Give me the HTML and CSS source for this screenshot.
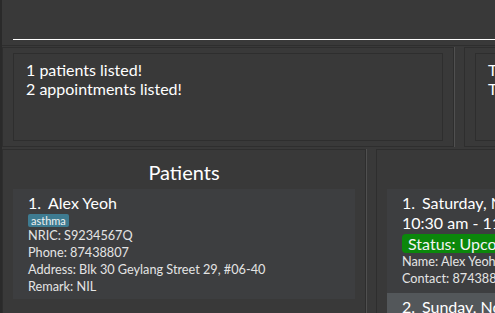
FILE: index.html
```html
<!DOCTYPE html>
<html>
<head>
<meta charset="utf-8">
<title>Clinic</title>
<link rel="stylesheet" href="styles.css">
</head>
<body>
<div class="app">
  <div class="command"><div class="command-field"></div></div>
  <div class="row results-row">
    <div class="pane result-pane left">
      <div class="box"><div class="result-text">1 patients listed!<br>2 appointments listed!</div></div>
    </div>
    <div class="divider"></div>
    <div class="pane result-pane right">
      <div class="box"><div class="result-text">Today's appointments: 1<br>Tomorrow's appointments: 1</div></div>
    </div>
  </div>
  <div class="row lists-row">
    <div class="pane list-pane">
      <div class="list-title">Patients</div>
      <div class="card patient-card">
        <div class="card-name"><span class="idx">1.</span>Alex Yeoh</div>
        <div class="tags"><span class="tag">asthma</span></div>
        <div class="detail">NRIC: S9234567Q</div>
        <div class="detail">Phone: 87438807</div>
        <div class="detail">Address: Blk 30 Geylang Street 29, #06-40</div>
        <div class="detail">Remark: NIL</div>
      </div>
    </div>
    <div class="divider"></div>
    <div class="pane list-pane">
      <div class="list-title">Appointments</div>
      <div class="card appt-card">
        <div class="card-name"><span class="idx">1.</span>Saturday, November 30, 2024</div>
        <div class="card-line">10:30 am - 11:30 am</div>
        <div class="status-row"><span class="status">Status: Upcoming</span></div>
        <div class="detail">Name: Alex Yeoh</div>
        <div class="detail">Contact: 87438807</div>
      </div>
      <div class="card appt-card odd">
        <div class="card-name"><span class="idx">2.</span>Sunday, November 30, 2024</div>
      </div>
    </div>
  </div>
</div>
</body>
</html>
```
FILE: styles.css
```css
html, body {
  margin: 0;
  padding: 0;
}
body {
  background: #393939;
  overflow: hidden;
  width: 495px;
  height: 313px;
  font-family: Lato, "Open Sans", sans-serif;
  color: #ffffff;
}
.app {
  width: 900px;
  height: 313px;
  border-left: 2px solid #2a2a2a;
}
.command {
  height: 45px;
  border-bottom: 1px solid #2e2e2e;
}
.command-field {
  margin-left: 11px;
  height: 39px;
  border-bottom: 1px solid #ffffff;
}
.row {
  display: flex;
  align-items: stretch;
}
.results-row {
  margin-top: 1px;
  height: 100px;
}
.pane {
  box-sizing: border-box;
  border: 1px solid #2e2e2e;
  flex: none;
}
.result-pane {
  padding: 5px 10px;
}
.result-pane.left {
  width: 452px;
}
.result-pane.right {
  width: 380px;
}
.box {
  box-sizing: border-box;
  height: 88px;
  border: 1px solid #2e2e2e;
  overflow: hidden;
  padding: 7px 12px;
}
.result-text {
  font-size: 16px;
  line-height: 18.5px;
  white-space: nowrap;
}
.divider {
  flex: none;
  width: 10px;
  box-sizing: border-box;
  border-left: 1px solid #505050;
}
.lists-row {
  margin-top: 2px;
  height: 200px;
}
.list-pane {
  width: 364px;
  padding: 10px 10px 0;
}
.list-title {
  font-size: 20px;
  line-height: 24px;
  height: 24px;
  margin-bottom: 5px;
  text-align: center;
}
.card {
  background: #3d3e40;
  white-space: nowrap;
  overflow: hidden;
}
.patient-card {
  padding: 4px 15px 4px;
}
.appt-card {
  padding: 4px 16px 6px 15px;
}
.appt-card.odd {
  background: #53575a;
}
.card-name, .card-line {
  font-size: 16px;
  line-height: 20px;
}
.idx {
  display: inline-block;
  width: 20px;
}
.tags {
  margin-top: 1px;
  height: 13px;
  display: flex;
}
.tag {
  background: #3e7b91;
  color: #f0f0f0;
  font-size: 11px;
  line-height: 13px;
  padding: 0 3px;
  border-radius: 2px;
}
.detail {
  font-size: 12.7px;
  line-height: 17px;
  color: #e4e4e4;
}
.patient-card .detail:first-of-type {
  margin-top: 2px;
}
.status-row {
  margin-top: 1px;
  height: 19px;
}
.status {
  display: inline-block;
  background: #0b870b;
  color: #f4f4f4;
  font-size: 16px;
  line-height: 19px;
  padding: 0 6px;
  border-radius: 4px;
}
```
